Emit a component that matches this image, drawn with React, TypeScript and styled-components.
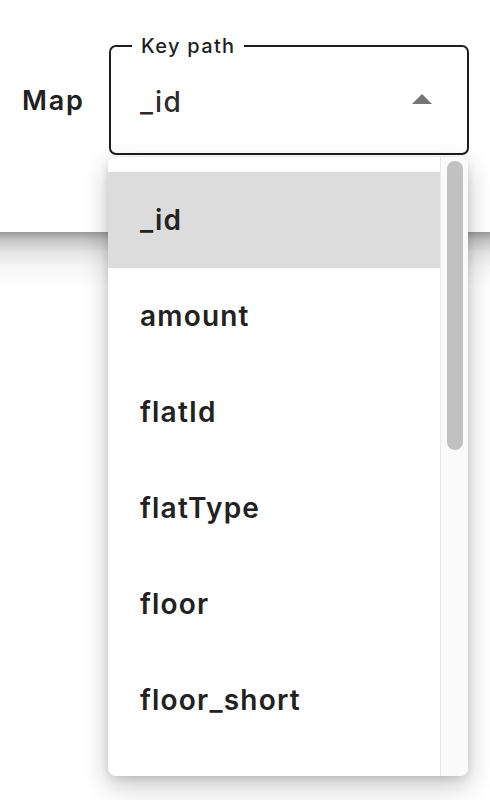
import React from "react";
import styled, { createGlobalStyle } from "styled-components";

const GlobalStyle = createGlobalStyle`
  html, body {
    margin: 0;
    padding: 0;
    background: #ffffff;
    font-family: Inter, "Noto Sans", sans-serif;
  }
`;

const Page = styled.div`
  position: relative;
  width: 490px;
  height: 800px;
  overflow: hidden;
`;

const Header = styled.header`
  height: 232px;
  background: #ffffff;
  display: flex;
  align-items: flex-start;
  padding: 45px 0 0 22px;
  box-sizing: border-box;
  gap: 21px;
`;

const Shade = styled.div`
  height: 568px;
  background: linear-gradient(
    to bottom,
    #9b9b9b 0px,
    #c4c4c4 8px,
    #e4e4e4 20px,
    #f5f5f5 34px,
    #ffffff 56px
  );
`;

const Label = styled.span`
  width: 66px;
  flex-shrink: 0;
  white-space: nowrap;
  font-size: 27px;
  font-weight: 600;
  letter-spacing: 1.8px;
  color: #212121;
  line-height: 112px;
`;

const Field = styled.fieldset`
  position: relative;
  margin: 0;
  width: 360px;
  height: 110px;
  box-sizing: border-box;
  border: 2px solid #1e1e1e;
  border-radius: 7px;
  padding: 0 30px 0 29px;
  display: flex;
  align-items: center;
  justify-content: space-between;
`;

const Legend = styled.legend`
  position: absolute;
  top: -13px;
  left: 21px;
  padding: 0 9px;
  background: #ffffff;
  font-size: 20px;
  font-weight: 500;
  letter-spacing: 1.3px;
  line-height: 24px;
  color: #1e1e1e;
`;

const Value = styled.span`
  font-size: 28px;
  font-weight: 500;
  letter-spacing: 1.3px;
  color: #2a2a2a;
  margin-top: 4px;
`;

const Menu = styled.div`
  position: absolute;
  top: 157px;
  left: 108px;
  width: 360px;
  height: 619px;
  display: flex;
  background: #ffffff;
  border-radius: 8px;
  overflow: hidden;
  box-shadow: 0 10px 26px rgba(0, 0, 0, 0.22), 0 2px 8px rgba(0, 0, 0, 0.12);
`;

const List = styled.ul`
  flex: 1;
  margin: 0;
  padding: 15px 0;
  list-style: none;
`;

const Item = styled.li<{ $selected?: boolean }>`
  height: 96px;
  display: flex;
  align-items: center;
  padding-left: 32px;
  font-size: 28px;
  font-weight: 600;
  letter-spacing: 1.2px;
  color: #222222;
  background: ${(p) => (p.$selected ? "#dcdcdc" : "transparent")};
`;

const Track = styled.div`
  width: 28px;
  flex-shrink: 0;
  box-sizing: border-box;
  background: #fafafa;
  border-left: 1px solid #e8e8e8;
  padding: 4px 5px 0 6px;
`;

const Thumb = styled.div`
  height: 289px;
  background: #c1c1c1;
  border-radius: 8px;
`;

const ArrowIcon = styled.svg`
  margin-right: -9px;
  flex-shrink: 0;
`;

const keys = ["_id", "amount", "flatId", "flatType", "floor", "floor_short"];

const ArrowUp = () => (
  <ArrowIcon width="48" height="48" viewBox="0 0 24 24">
    <path d="m7 14 5-5 5 5z" fill="#757575" />
  </ArrowIcon>
);

export default function App() {
  return (
    <Page>
      <GlobalStyle />
      <Header>
        <Label>Map</Label>
        <Field>
          <Legend>Key path</Legend>
          <Value>_id</Value>
          <ArrowUp />
        </Field>
      </Header>
      <Shade />
      <Menu>
        <List>
          {keys.map((k, i) => (
            <Item key={k} $selected={i === 0}>
              {k}
            </Item>
          ))}
        </List>
        <Track>
          <Thumb />
        </Track>
      </Menu>
    </Page>
  );
}
